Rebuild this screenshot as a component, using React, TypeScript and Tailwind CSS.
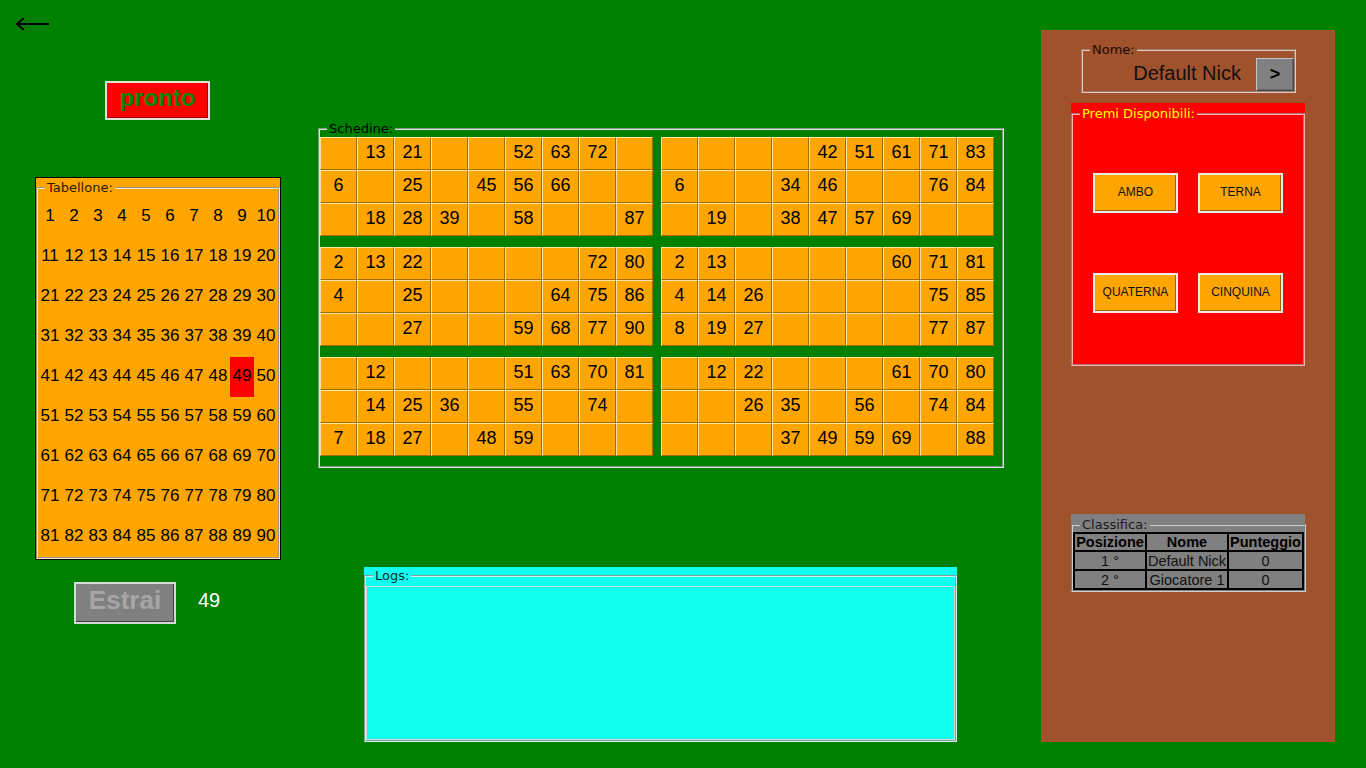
import React from "react";

type Row = number[];
const cards: Row[][] = [
  [
    [0, 13, 21, 0, 0, 52, 63, 72, 0],
    [6, 0, 25, 0, 45, 56, 66, 0, 0],
    [0, 18, 28, 39, 0, 58, 0, 0, 87],
  ],
  [
    [0, 0, 0, 0, 42, 51, 61, 71, 83],
    [6, 0, 0, 34, 46, 0, 0, 76, 84],
    [0, 19, 0, 38, 47, 57, 69, 0, 0],
  ],
  [
    [2, 13, 22, 0, 0, 0, 0, 72, 80],
    [4, 0, 25, 0, 0, 0, 64, 75, 86],
    [0, 0, 27, 0, 0, 59, 68, 77, 90],
  ],
  [
    [2, 13, 0, 0, 0, 0, 60, 71, 81],
    [4, 14, 26, 0, 0, 0, 0, 75, 85],
    [8, 19, 27, 0, 0, 0, 0, 77, 87],
  ],
  [
    [0, 12, 0, 0, 0, 51, 63, 70, 81],
    [0, 14, 25, 36, 0, 55, 0, 74, 0],
    [7, 18, 27, 0, 48, 59, 0, 0, 0],
  ],
  [
    [0, 12, 22, 0, 0, 0, 61, 70, 80],
    [0, 0, 26, 35, 0, 56, 0, 74, 84],
    [0, 0, 0, 37, 49, 59, 69, 0, 88],
  ],
];

const legendCls =
  "ml-[7px] px-[2px] text-[13px] leading-[15px] font-['DejaVu_Sans',sans-serif]";

function Card({ rows }: { rows: Row[] }) {
  return (
    <div className="grid grid-cols-[repeat(9,37px)]">
      {rows.flat().map((n, i) => (
        <div
          key={i}
          className="w-[37px] h-[33px] bg-[#ffa500] border-t border-l border-t-[#ffe6a6] border-l-[#ffe6a6] border-r border-b border-r-[#a56a00] border-b-[#a56a00] flex items-center justify-center text-[18px] leading-none text-black pb-[4px]"
        >
          {n ? n : ""}
        </div>
      ))}
    </div>
  );
}

export default function App() {
  const nums = Array.from({ length: 90 }, (_, i) => i + 1);
  return (
    <div className="w-[1366px] h-[768px] bg-[#008000] flex items-start overflow-hidden font-['Liberation_Sans',Arial,sans-serif]">
      {/* left column */}
      <div className="w-[318px] shrink-0 flex flex-col items-start">
        <svg
          className="ml-[14px] mt-[14px]"
          width="36"
          height="18"
          viewBox="0 0 36 18"
          fill="none"
          stroke="black"
          strokeWidth="2"
        >
          <path d="M35 10H3" />
          <path d="M10 4L3 10L10 16" />
        </svg>
        <button className="ml-[105px] mt-[49px] w-[105px] h-[39px] bg-[#ff0000] border-2 border-[#e6e0d8] shadow-[inset_-1px_-1px_0_rgba(0,0,0,0.35)] text-[24px] font-bold text-[#078707] leading-none flex items-center justify-center pb-[6px]">
          pronto
        </button>
        <div className="ml-[35px] mt-[57px] w-[246px] h-[383px] border border-black bg-[#ffa500] pt-[2px]">
          <fieldset className="border-2 [border-style:groove] border-[#f0e6cc]">
            <legend className={legendCls + " text-[#2a1a00]"}>Tabellone:</legend>
            <div className="mt-[2px] grid grid-cols-[repeat(10,24px)]">
              {nums.map((n) => (
                <div
                  key={n}
                  className={
                    "h-[40px] flex items-center justify-center text-[17px] text-black pb-[3px] " +
                    (n === 49 ? "bg-[#ff0000]" : "")
                  }
                >
                  {n}
                </div>
              ))}
            </div>
          </fieldset>
        </div>
        <div className="ml-[74px] mt-[22px] flex items-center">
          <button className="w-[102px] h-[42px] bg-[#808080] border-2 border-[#d8d8d8] shadow-[inset_-1px_-1px_0_rgba(0,0,0,0.5)] text-[26px] font-bold text-[#a6a6a6] leading-none flex items-center justify-center pb-[6px]">
            Estrai
          </button>
          <span className="ml-[22px] mb-[6px] text-[20px] text-white">49</span>
        </div>
      </div>

      {/* middle column */}
      <div className="w-[686px] shrink-0 flex flex-col items-start">
        <fieldset className="mt-[121px] w-[686px] border-2 [border-style:groove] border-[#d8e8d8] pr-[8px] pb-[10px]">
          <legend className={legendCls + " text-black"}>Schedine:</legend>
          <div className="mt-[1px] grid grid-cols-[333px_333px] gap-x-[8px] gap-y-[11px]">
            {cards.map((c, i) => (
              <Card key={i} rows={c} />
            ))}
          </div>
        </fieldset>
        <div className="ml-[46px] mt-[99px] w-[593px] h-[175px] bg-[#10ffee] pt-[1px]">
          <fieldset className="border-2 [border-style:groove] border-[#c8f4f0]">
            <legend className={legendCls + " text-[#062a2a]"}>Logs:</legend>
            <div className="mt-[3px] h-[154px] border border-[#d6d6d6] bg-[#10ffee]" />
          </fieldset>
        </div>
      </div>

      {/* right panel */}
      <div className="ml-auto mr-[31px] mt-[30px] w-[294px] h-[712px] bg-[#a0522d] flex flex-col items-start">
        <fieldset className="ml-[40px] mt-[12px] w-[215px] border-2 [border-style:groove] border-[#e8c8b8]">
          <legend className={legendCls + " text-[#1a0a00]"}>Nome:</legend>
          <div className="flex justify-end items-start">
            <span className="mt-[5px] text-[20px] leading-[23px] text-[#111]">Default Nick</span>
            <button className="ml-[15px] mt-[1px] w-[38px] h-[33px] bg-[#808080] border border-t-[#c4c4c4] border-l-[#c4c4c4] border-r-[#4a4a4a] border-b-[#4a4a4a] shadow-[inset_-1px_-1px_0_#666] text-[18px] font-bold text-black leading-none flex items-center justify-center pb-[1px]">
              &gt;
            </button>
          </div>
        </fieldset>

        <div className="ml-[30px] mt-[10px] w-[234px] h-[263px] bg-[#ff0000] pt-[3px]">
          <fieldset className="h-[260px] border-2 [border-style:groove] border-[#ffb0b0]">
            <legend className={legendCls + " text-[#ffff00]"}>Premi Disponibili:</legend>
            <div className="ml-[20px] mt-[52px] grid grid-cols-[85px_85px] gap-x-[20px] gap-y-[60px]">
              {["AMBO", "TERNA", "QUATERNA", "CINQUINA"].map((t) => (
                <button
                  key={t}
                  className="w-[85px] h-[40px] bg-[#ffa500] border-2 border-[#ececec] shadow-[inset_-1px_-1px_0_#9a6200] text-[12px] text-[#111] leading-none flex items-center justify-center pb-[2px]"
                >
                  {t}
                </button>
              ))}
            </div>
          </fieldset>
        </div>

        <div className="ml-[30px] mt-[148px] w-[234px] h-[78px] bg-[#808080] pt-[3px]">
          <fieldset className="border-2 [border-style:groove] border-[#d0d0d0]">
            <legend className={legendCls + " text-[#1a1a1a]"}>Classifica:</legend>
            <table className="w-[229px] table-fixed border-collapse text-[14.5px] leading-[16px] text-[#111]">
              <colgroup>
                <col className="w-[72px]" />
                <col className="w-[82px]" />
                <col className="w-[75px]" />
              </colgroup>
              <thead>
                <tr className="h-[18px]">
                  <th className="border-2 border-black p-0 font-bold text-black">Posizione</th>
                  <th className="border-2 border-black p-0 font-bold text-black">Nome</th>
                  <th className="border-2 border-black p-0 font-bold text-black">Punteggio</th>
                </tr>
              </thead>
              <tbody>
                <tr className="h-[19px]">
                  <td className="border-2 border-black p-0 text-center">1 °</td>
                  <td className="border-2 border-black p-0 text-center whitespace-nowrap">Default Nick</td>
                  <td className="border-2 border-black p-0 text-center">0</td>
                </tr>
                <tr className="h-[19px]">
                  <td className="border-2 border-black p-0 text-center">2 °</td>
                  <td className="border-2 border-black p-0 text-center whitespace-nowrap">Giocatore 1</td>
                  <td className="border-2 border-black p-0 text-center">0</td>
                </tr>
              </tbody>
            </table>
          </fieldset>
        </div>
      </div>
    </div>
  );
}
